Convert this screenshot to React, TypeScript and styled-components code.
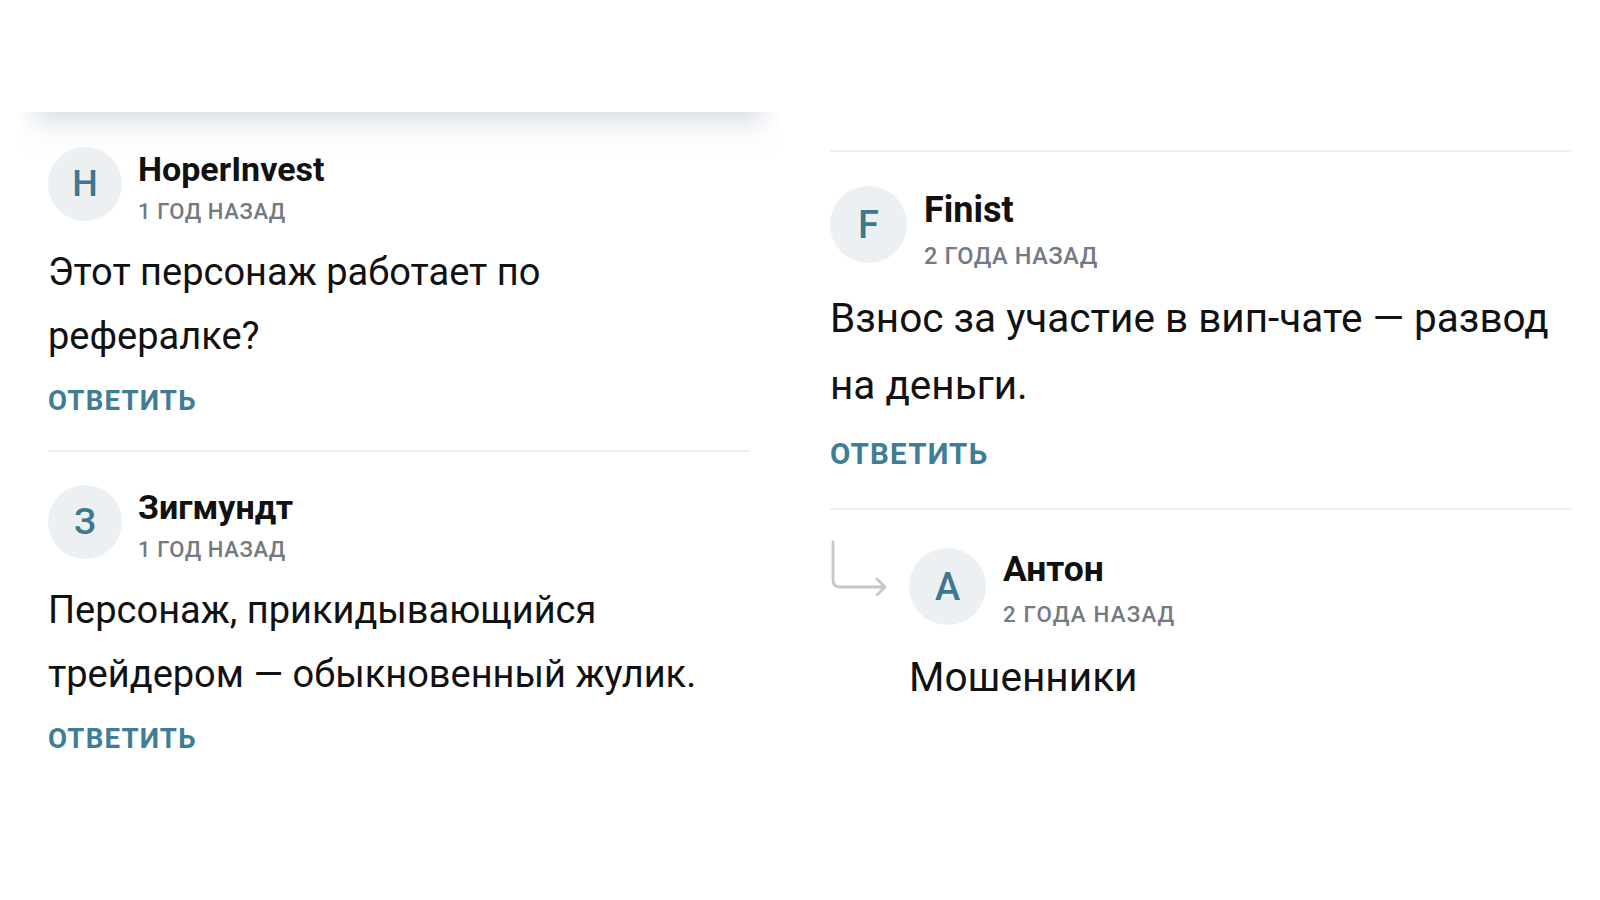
import React from "react";
import styled, { createGlobalStyle } from "styled-components";

const Global = createGlobalStyle`
  html, body { margin: 0; padding: 0; background: #ffffff; }
  body { font-family: Roboto, "Noto Sans", Arial, sans-serif; color: #111; }
`;

const Page = styled.div`
  width: 1600px;
  height: 900px;
  display: grid;
  grid-template-columns: 766px 741px;
  column-gap: 48px;
  padding-left: 16px;
  box-sizing: border-box;
  overflow: hidden;
`;

const Column = styled.div<{ $top: number; $pad: number }>`
  display: flex;
  flex-direction: column;
  padding-top: ${(p) => p.$top}px;
  padding-left: ${(p) => p.$pad}px;
  padding-right: ${(p) => p.$pad}px;
`;

const Shadow = styled.div`
  height: 46px;
  margin: 0 -32px 0 -32px;
  background: linear-gradient(to bottom, rgba(208, 214, 220, 0.62), rgba(236, 240, 243, 0.35) 50%, rgba(255, 255, 255, 0));
  -webkit-mask-image: linear-gradient(to right, transparent 0, #000 36px, #000 calc(100% - 36px), transparent 100%);
  mask-image: linear-gradient(to right, transparent 0, #000 36px, #000 calc(100% - 36px), transparent 100%);
`;

const Divider = styled.div<{ $mt: number }>`
  height: 2px;
  margin-top: ${(p) => p.$mt}px;
  background: #eef0f2;
`;

const Comment = styled.div<{ $mt: number }>`
  display: flex;
  flex-direction: column;
  margin-top: ${(p) => p.$mt}px;
`;

const Header = styled.div<{ $gap: number }>`
  display: flex;
  align-items: flex-start;
  gap: ${(p) => p.$gap}px;
`;

const Avatar = styled.div<{ $size: number }>`
  width: ${(p) => p.$size}px;
  height: ${(p) => p.$size}px;
  flex: none;
  border-radius: 50%;
  background: #edf0f3;
  color: #3d7891;
  display: flex;
  align-items: center;
  justify-content: center;
  font-size: ${(p) => Math.round(p.$size * 0.49)}px;
  font-weight: 500;
`;

const Meta = styled.div<{ $top: number }>`
  display: flex;
  flex-direction: column;
  padding-top: ${(p) => p.$top}px;
`;

const Name = styled.div<{ $size: number }>`
  font-size: ${(p) => p.$size}px;
  line-height: ${(p) => p.$size + 6}px;
  font-weight: 700;
  color: #111;
  white-space: nowrap;
`;

const Time = styled.div<{ $size: number; $mt: number; $ls: number }>`
  font-size: ${(p) => p.$size}px;
  line-height: ${(p) => p.$size + 4}px;
  margin-top: ${(p) => p.$mt}px;
  font-weight: 500;
  color: #737a82;
  letter-spacing: ${(p) => p.$ls}px;
  text-transform: uppercase;
  white-space: nowrap;
`;

const Body = styled.div<{ $size: number; $lh: number; $mt: number }>`
  font-size: ${(p) => p.$size}px;
  line-height: ${(p) => p.$lh}px;
  margin-top: ${(p) => p.$mt}px;
  color: #111;
  white-space: nowrap;
`;

const Reply = styled.div<{ $size: number; $mt: number }>`
  font-size: ${(p) => p.$size}px;
  line-height: ${(p) => p.$size + 4}px;
  margin-top: ${(p) => p.$mt}px;
  font-weight: 700;
  letter-spacing: 1.2px;
  color: #3f7d97;
  text-transform: uppercase;
`;

const Thread = styled.div`
  display: flex;
  align-items: flex-start;
  gap: 21px;
  margin-top: 38px;
`;

const ArrowIcon = styled.svg`
  flex: none;
  margin-top: -8px;
`;

const ReplyBody = styled.div`
  display: flex;
  flex-direction: column;
`;

export default function App() {
  return (
    <>
      <Global />
      <Page>
        <Column $top={112} $pad={32}>
          <Shadow />
          <Comment $mt={-11}>
            <Header $gap={16}>
              <Avatar $size={74}>H</Avatar>
              <Meta $top={2}>
                <Name $size={34}>HoperInvest</Name>
                <Time $size={22} $mt={10} $ls={0.6}>1 год назад</Time>
              </Meta>
            </Header>
            <Body $size={38} $lh={64} $mt={15}>
              Этот персонаж работает по
              <br />
              рефералке?
            </Body>
            <Reply $size={27.6} $mt={17}>Ответить</Reply>
          </Comment>
          <Divider $mt={33} />
          <Comment $mt={33}>
            <Header $gap={16}>
              <Avatar $size={74}>З</Avatar>
              <Meta $top={2}>
                <Name $size={34}>Зигмундт</Name>
                <Time $size={22} $mt={10} $ls={0.6}>1 год назад</Time>
              </Meta>
            </Header>
            <Body $size={38} $lh={64} $mt={15}>
              Персонаж, прикидывающийся
              <br />
              трейдером — обыкновенный жулик.
            </Body>
            <Reply $size={27.6} $mt={17}>Ответить</Reply>
          </Comment>
        </Column>
        <Column $top={150} $pad={0}>
          <Divider $mt={0} />
          <Comment $mt={34}>
            <Header $gap={17}>
              <Avatar $size={77}>F</Avatar>
              <Meta $top={3}>
                <Name $size={36}>Finist</Name>
                <Time $size={23.5} $mt={12} $ls={0.6}>2 года назад</Time>
              </Meta>
            </Header>
            <Body $size={40.5} $lh={67} $mt={14}>
              Взнос за участие в вип-чате — развод
              <br />
              на деньги.
            </Body>
            <Reply $size={29.5} $mt={19}>Ответить</Reply>
          </Comment>
          <Divider $mt={37} />
          <Thread>
            <ArrowIcon width="58" height="56" viewBox="0 0 58 56">
              <path
                d="M3 2 V40 Q3 47 10 47 H55 M47 39 L55 47 L47 55"
                fill="none"
                stroke="#c4c8cc"
                strokeWidth="2.8"
                strokeLinecap="round"
                strokeLinejoin="round"
              />
            </ArrowIcon>
            <ReplyBody>
              <Header $gap={17}>
                <Avatar $size={77}>A</Avatar>
                <Meta $top={1}>
                  <Name $size={35.4}>Антон</Name>
                  <Time $size={22.3} $mt={11} $ls={1.2}>2 года назад</Time>
                </Meta>
              </Header>
              <Body $size={40.6} $lh={56} $mt={21}>
                Мошенники
              </Body>
            </ReplyBody>
          </Thread>
        </Column>
      </Page>
    </>
  );
}
